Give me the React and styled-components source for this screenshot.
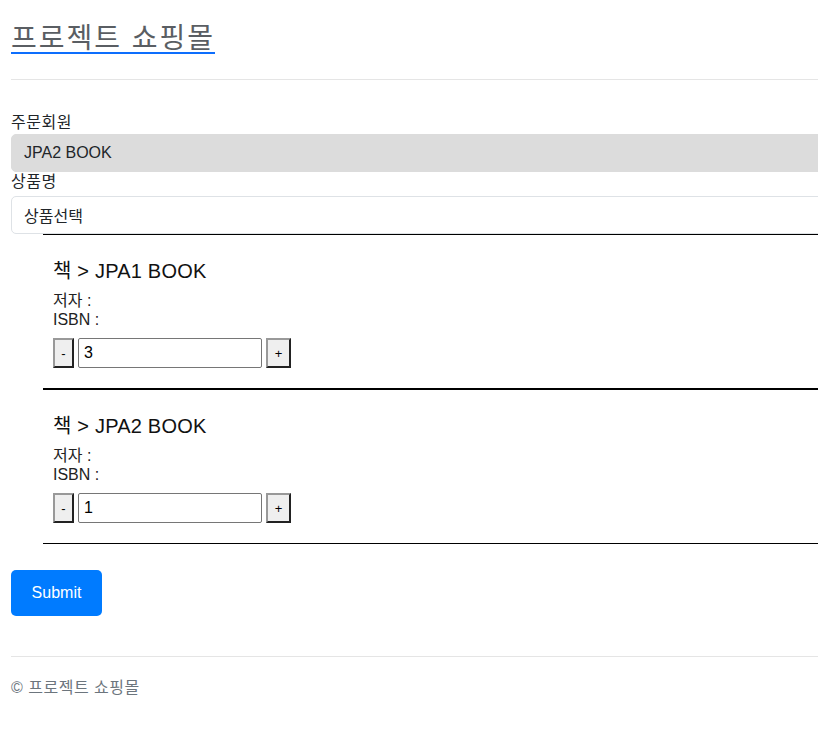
import React, { useState } from "react";
import styled, { createGlobalStyle } from "styled-components";

const GlobalStyle = createGlobalStyle`
  html, body {
    margin: 0;
    padding: 0;
    background: #fff;
    overflow-x: hidden;
  }
  body {
    font-family: "Liberation Sans", Arial, "Noto Sans CJK KR", sans-serif;
    font-size: 16px;
    color: #212529;
  }
`;

const Page = styled.div`
  width: 1000px;
  padding: 0 0 0 11px;
`;

const Header = styled.div`
  padding-top: 25px;
  padding-bottom: 25px;
  border-bottom: 1px solid #e5e5e5;
`;

const Title = styled.a`
  display: inline-block;
  font-size: 28px;
  line-height: 27px;
  color: #5a5e63;
  text-decoration: none;
  border-bottom: 2px solid #0d6efd;
  letter-spacing: 2px;
`;

const Form = styled.form`
  padding-top: 33px;
`;

const Label = styled.label`
  display: block;
  line-height: 20px;
  color: #212529;
  letter-spacing: 0.5px;
`;

const Field = styled.div`
  height: 38px;
  box-sizing: border-box;
  border: 1px solid ${(p) => (p.disabled ? "#dcdcdc" : "#dee2e6")};
  background: ${(p) => (p.disabled ? "#dcdcdc" : "#fff")};
  border-radius: 5px;
  padding: 0 12px;
  display: flex;
  align-items: center;
  font-size: 16px;
  color: #212529;
  margin-top: ${(p) => (p.disabled ? "1px" : "4px")};
`;

const ItemList = styled.ul`
  list-style: none;
  margin: 0;
  padding: 0 0 0 32px;
`;

const Item = styled.li`
  border-top: 1px solid #000;
  border-bottom: 1px solid #000;
  padding: 24px 10px 20px;
`;

const ItemTitle = styled.div`
  font-size: 20px;
  line-height: 24px;
  margin-bottom: 8px;
  color: #111;
  letter-spacing: 0.2px;
`;

const Meta = styled.div`
  line-height: 19px;
  color: #222;
`;

const Counter = styled.div`
  display: flex;
  align-items: center;
  gap: 4px;
  margin-top: 9px;
`;

const StepButton = styled.button`
  height: 30px;
  min-width: ${(p) => (p.wide ? "25px" : "21px")};
  box-sizing: border-box;
  border: 2px solid;
  border-color: #999 #222 #222 #999;
  background: #efefef;
  font-family: "Liberation Sans", Arial, sans-serif;
  font-size: 13px;
  padding: 0 4px;
  color: #000;
`;

const QtyInput = styled.input`
  width: 184px;
  height: 30px;
  box-sizing: border-box;
  border: 1px solid #767676;
  border-radius: 2px;
  padding: 0 5px;
  font-family: "Liberation Sans", Arial, sans-serif;
  font-size: 16px;
  color: #000;
`;

const SubmitButton = styled.button`
  margin-top: 26px;
  width: 91px;
  height: 46px;
  border: none;
  border-radius: 5px;
  background: #007bff;
  color: #fff;
  font-family: "Liberation Sans", Arial, sans-serif;
  font-size: 16px;
`;

const Footer = styled.footer`
  margin-top: 40px;
  border-top: 1px solid #e5e5e5;
  padding-top: 21px;
  color: #6c757d;
  line-height: 19px;
  letter-spacing: 0.5px;
`;

const items = [
  { name: "JPA1 BOOK", count: 3 },
  { name: "JPA2 BOOK", count: 1 },
];

export default function App() {
  const [counts, setCounts] = useState(items.map((i) => i.count));

  const change = (idx, d) =>
    setCounts((c) => c.map((v, i) => (i === idx ? Math.max(0, v + d) : v)));

  return (
    <>
      <GlobalStyle />
      <Page>
        <Header>
          <Title href="#">프로젝트 쇼핑몰</Title>
        </Header>
        <Form onSubmit={(e) => e.preventDefault()}>
          <Label>주문회원</Label>
          <Field disabled>JPA2 BOOK</Field>
          <Label>상품명</Label>
          <Field>상품선택</Field>
          <ItemList>
            {items.map((it, idx) => (
              <Item key={it.name}>
                <ItemTitle>책 &gt; {it.name}</ItemTitle>
                <Meta>저자 :</Meta>
                <Meta>ISBN :</Meta>
                <Counter>
                  <StepButton type="button" onClick={() => change(idx, -1)}>
                    -
                  </StepButton>
                  <QtyInput
                    value={counts[idx]}
                    onChange={(e) =>
                      setCounts((c) =>
                        c.map((v, i) => (i === idx ? e.target.value : v))
                      )
                    }
                  />
                  <StepButton wide type="button" onClick={() => change(idx, 1)}>
                    +
                  </StepButton>
                </Counter>
              </Item>
            ))}
          </ItemList>
          <SubmitButton type="submit">Submit</SubmitButton>
        </Form>
        <Footer>© 프로젝트 쇼핑몰</Footer>
      </Page>
    </>
  );
}
